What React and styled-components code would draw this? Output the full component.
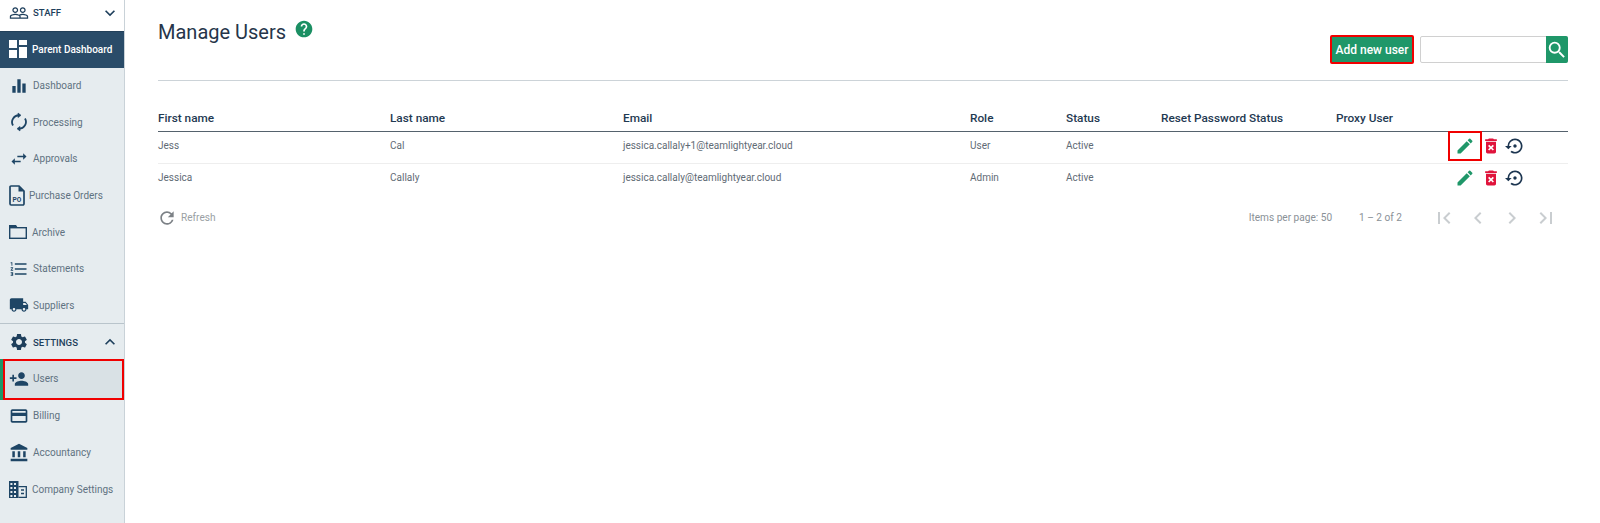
import React from "react";
import styled, { createGlobalStyle } from "styled-components";
import {
  MdExpandMore, MdExpandLess, MdEqualizer, MdSwapHoriz, MdLocalShipping, MdSettings,
  MdPersonAdd, MdCreditCard, MdAccountBalance, MdEdit, MdDeleteForever, MdSettingsBackupRestore, MdSearch,
  MdRefresh, MdFormatListNumbered, MdHelp, MdFirstPage, MdLastPage,
  MdChevronLeft, MdChevronRight, MdPeopleOutline,
} from "react-icons/md";

const Global = createGlobalStyle`
  html, body { margin: 0; padding: 0; background: #fff; }
  body { font-family: Roboto, "Liberation Sans", sans-serif; color: #1f3a52; }
`;

const Page = styled.div`
  display: flex;
  width: 1600px;
  height: 523px;
  overflow: hidden;
`;

const Sidebar = styled.nav`
  width: 125px;
  box-sizing: border-box;
  flex: none;
  background: #e6ecef;
  border-right: 1px solid #c9d2d8;
  display: flex;
  flex-direction: column;
`;

const SectionHead = styled.div`
  height: ${p => p.$h}px;
  flex: none;
  box-sizing: border-box;
  display: flex;
  align-items: center;
  padding: 0 4px ${p => p.$pb ?? 0}px 9px;
  margin-top: ${p => (p.$rule ? -1 : 0)}px;
  gap: 4px;
  background: ${p => (p.$white ? "#fff" : "transparent")};
  border-top: ${p => (p.$rule ? "1px solid #b9c4cb" : "none")};
  color: #1e3f5c;
  font-size: 9.6px;
  font-weight: 500;
  span { flex: 1; }
`;

const NavItem = styled.div`
  height: 36.6px;
  flex: none;
  display: flex;
  align-items: center;
  gap: ${p => p.$gap ?? 4}px;
  padding: 0 0 1px 9px;
  font-size: 10px;
  color: #5f7281;
  box-sizing: border-box;
  svg { color: #1e4565; flex: none; }
`;

const ActiveItem = styled(NavItem)`
  background: #2a4c69;
  color: #fff;
  border-top: 1px solid #22405a;
  font-weight: 500;
  height: 37px;
  gap: 5px;
  padding-bottom: 2px;
  svg { color: #fff; }
`;

const SelectedItem = styled(NavItem)`
  background: #d9e1e5;
  outline: 2px solid #f00000;
  outline-offset: -2px;
  box-shadow: -3px 0 0 #1f9769;
  margin: -1px 0 -2px 3px;
  padding: 0 0 2px 6px;
  width: 121px;
  height: 41px;
`;

const Main = styled.main`
  flex: 1;
  min-width: 0;
  padding: 0 32px 0 33px;
  display: flex;
  flex-direction: column;
`;

const Header = styled.header`
  height: 81px;
  flex: none;
  box-sizing: border-box;
  border-bottom: 1px solid #ccd3d8;
  display: flex;
  justify-content: space-between;
`;

const TitleRow = styled.div`
  display: flex;
  align-items: flex-start;
  gap: 8px;
  padding-top: 20px;
`;

const Title = styled.h1`
  margin: 0;
  font-size: 20px;
  line-height: 24px;
  font-weight: 400;
  color: #26354a;
`;

const HelpIcon = styled(MdHelp)`
  color: #1b8f63;
  margin-top: -1px;
`;

const Tools = styled.div`
  display: flex;
  align-items: flex-start;
  gap: 6px;
  padding-top: 36px;
`;

const AddButton = styled.button`
  width: 84px;
  height: 29px;
  margin-top: -1px;
  border: 2px solid #f00000;
  border-radius: 2px;
  background: #1f9769;
  color: #fff;
  font: 500 12px Roboto, sans-serif;
  padding: 0;
`;

const Search = styled.div`
  width: 148px;
  height: 27px;
  box-sizing: border-box;
  display: flex;
  justify-content: flex-end;
  border: 1px solid #d0d0d0;
  border-radius: 2px;
`;

const SearchButton = styled.div`
  width: 22px;
  margin: -1px -1px -1px 0;
  background: #1f9769;
  color: #fff;
  display: flex;
  align-items: center;
  justify-content: center;
  border-radius: 0 2px 2px 0;
`;

const Row = styled.div`
  display: grid;
  grid-template-columns: 232px 233px 347px 96px 95px 175px 1fr 119px;
  grid-template-rows: 100%;
  align-items: center;
  box-sizing: border-box;
  height: ${p => p.$h}px;
  padding-top: ${p => p.$pt ?? 0}px;
  border-bottom: ${p => p.$line};
`;

const HeadCell = styled.div`
  font-size: 11.8px;
  font-weight: 500;
  color: #1f3a52;
`;

const Cell = styled.div`
  font-size: 10px;
  color: #5f6b75;
  padding-bottom: 5px;
`;

const Actions = styled.div`
  display: flex;
  align-items: center;
  align-self: start;
  height: 30px;
  margin-top: -1px;
`;

const EditWrap = styled.div`
  width: 34px;
  height: 30px;
  box-sizing: border-box;
  display: flex;
  align-items: center;
  justify-content: center;
  color: #1f9769;
  outline: ${p => (p.$mark ? "2px solid #f00000" : "none")};
  outline-offset: -2px;
  margin-left: -1px;
`;

const Trash = styled(MdDeleteForever)`
  color: #e0143c;
  margin-left: -1px;
`;

const Restore = styled(MdSettingsBackupRestore)`
  color: #1c3550;
  margin-left: 4px;
`;

const Footer = styled.div`
  height: 43px;
  display: flex;
  align-items: center;
  font-size: 10.1px;
  color: #8a9197;
`;

const RefreshLink = styled.div`
  display: flex;
  align-items: center;
  gap: 4px;
  margin-left: -1px;
  color: #9a9fa4;
  svg { color: #7c8186; }
`;

const Paging = styled.div`
  margin-left: auto;
  display: flex;
  align-items: center;
`;

const RangeText = styled.span`
  margin-left: 27px;
  margin-right: 30px;
`;

const PageIcons = styled.div`
  display: flex;
  gap: 10px;
  margin-right: 10px;
  color: #c9cdd0;
`;

const PanelsIcon = () => (
  <svg width="18" height="18" viewBox="0 0 18 18" fill="#fff">
    <path d="M0 0h8v8H0zM10 0h8v5h-8zM0 10h8v8H0zM10 7h8v11h-8z" />
  </svg>
);

const LoopIcon = () => (
  <svg width="20" height="20" viewBox="0 0 20 20" fill="none" stroke="currentColor" strokeWidth="1.8">
    <path d="M4 13.5A6.8 6.8 0 0 1 10.5 3.3" />
    <path d="M16 6.5A6.8 6.8 0 0 1 9.5 16.7" />
    <path d="M9 1l3 2.3-3 2.3zM11 14.4l-3 2.3 3 2.3z" fill="currentColor" strokeWidth="0.6" />
  </svg>
);

const PoIcon = () => (
  <svg width="16" height="21" viewBox="0 0 16 21" fill="none">
    <path d="M2 1h8l5 5v12.8a1.2 1.2 0 0 1-1.2 1.2H2.2A1.2 1.2 0 0 1 1 18.8V2a1 1 0 0 1 1-1z" stroke="currentColor" strokeWidth="1.7" />
    <path d="M9.5 1v5.5H15z" fill="currentColor" />
    <text x="8" y="16.5" textAnchor="middle" fontSize="6.6" fontWeight="700" fill="currentColor" fontFamily="Roboto">PO</text>
  </svg>
);

const FolderIcon = () => (
  <svg width="18" height="14" viewBox="0 0 18 14" fill="none">
    <rect x="0.7" y="2.7" width="16.6" height="10.6" stroke="currentColor" strokeWidth="1.4" />
    <path d="M0 0h7l2 3H0z" fill="currentColor" />
  </svg>
);

const CompanyIcon = () => (
  <svg width="18" height="17" viewBox="0 0 18 17" fill="none">
    <path d="M0 0h9.5v17H0zM1.4 2v2h2V2zM5 2v2h2V2zM1.4 6v2h2V6zM5 6v2h2V6zM1.4 10v2h2v-2zM5 10v2h2v-2zM1.4 14v2h2v-2zM5 14v2h2v-2z" fill="currentColor" fillRule="evenodd" />
    <path d="M9.5 5.7h7.8v10.6H9.5" stroke="currentColor" strokeWidth="1.3" />
    <path d="M12 9h3M12 12.5h3" stroke="currentColor" strokeWidth="1.4" />
  </svg>
);

const rows = [
  ["Jess", "Cal", "jessica.callaly+1@teamlightyear.cloud", "User", "Active", true],
  ["Jessica", "Callaly", "jessica.callaly@teamlightyear.cloud", "Admin", "Active", false],
];

const heads = ["First name", "Last name", "Email", "Role", "Status", "Reset Password Status", "Proxy User", ""];

export default function App() {
  return (
    <Page>
      <Global />
      <Sidebar>
        <SectionHead $h={31} $white $pb={6}>
          <MdPeopleOutline size={20} />
          <span>STAFF</span>
          <MdExpandMore size={20} />
        </SectionHead>
        <ActiveItem><PanelsIcon />Parent Dashboard</ActiveItem>
        <NavItem $gap={4}><MdEqualizer size={20} />Dashboard</NavItem>
        <NavItem $gap={4}><LoopIcon />Processing</NavItem>
        <NavItem $gap={4}><MdSwapHoriz size={20} />Approvals</NavItem>
        <NavItem $gap={4}><PoIcon />Purchase Orders</NavItem>
        <NavItem $gap={5}><FolderIcon />Archive</NavItem>
        <NavItem $gap={4}><MdFormatListNumbered size={20} />Statements</NavItem>
        <NavItem $gap={4}><MdLocalShipping size={20} />Suppliers</NavItem>
        <SectionHead $h={37} $rule>
          <MdSettings size={20} />
          <span>SETTINGS</span>
          <MdExpandLess size={20} />
        </SectionHead>
        <SelectedItem $gap={4}><MdPersonAdd size={20} />Users</SelectedItem>
        <NavItem $gap={4}><MdCreditCard size={20} />Billing</NavItem>
        <NavItem $gap={4}><MdAccountBalance size={20} />Accountancy</NavItem>
        <NavItem $gap={5}><CompanyIcon />Company Settings</NavItem>
      </Sidebar>
      <Main>
        <Header>
          <TitleRow>
            <Title>Manage Users</Title>
            <HelpIcon size={20} />
          </TitleRow>
          <Tools>
            <AddButton>Add new user</AddButton>
            <Search>
              <SearchButton><MdSearch size={22} /></SearchButton>
            </Search>
          </Tools>
        </Header>
        <Row $h={51} $pt={23} $line="1px solid #55626d">
          {heads.map((h, i) => <HeadCell key={i}>{h}</HeadCell>)}
        </Row>
        {rows.map((r, i) => (
          <Row key={r[0]} $h={32} $line={i === 0 ? "1px solid #eeeeee" : "none"}>
            <Cell>{r[0]}</Cell>
            <Cell>{r[1]}</Cell>
            <Cell>{r[2]}</Cell>
            <Cell>{r[3]}</Cell>
            <Cell>{r[4]}</Cell>
            <Cell />
            <Cell />
            <Actions>
              <EditWrap $mark={r[5]}><MdEdit size={20} /></EditWrap>
              <Trash size={20} />
              <Restore size={20} />
            </Actions>
          </Row>
        ))}
        <Footer>
          <RefreshLink><MdRefresh size={20} />Refresh</RefreshLink>
          <Paging>
            <span>Items per page: 50</span>
            <RangeText>1 – 2 of 2</RangeText>
            <PageIcons>
              <MdFirstPage size={24} />
              <MdChevronLeft size={24} />
              <MdChevronRight size={24} />
              <MdLastPage size={24} />
            </PageIcons>
          </Paging>
        </Footer>
      </Main>
    </Page>
  );
}
